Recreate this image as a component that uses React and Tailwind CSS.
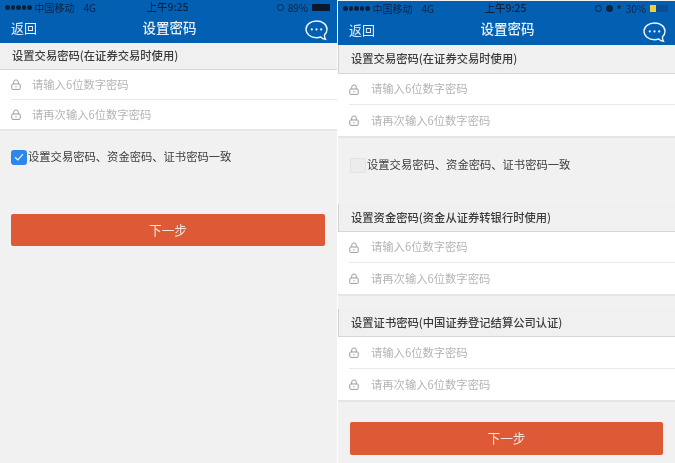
const FONT = '"Noto Sans CJK SC", "Liberation Sans", sans-serif';

function Lock() {
  return (
    <svg width="10" height="11" viewBox="0 0 10 11" fill="none" stroke="#9c9c9c" strokeWidth="1" className="shrink-0">
      <path d="M2.700 5V3.200a2.300 2.300 0 0 1 4.600 0V5" />
      <rect x="0.800" y="5" width="8.400" height="5.400" rx="0.800" />
      <path d="M5 7v1.400" />
    </svg>
  );
}

function Bubble() {
  return (
    <svg width="23" height="21" viewBox="0 0 23 21" fill="none">
      <path d="M11.500 1C17.400 1 22 4.500 22 9.200c0 2.300-1 4.200-2.500 5.600-.2 1.500.2 3.100 1 4.500-2-.2-3.600-1-4.800-2.300-1.300.5-2.700.7-4.200.7C5.600 17.700 1 14 1 9.300S5.600 1 11.500 1z" stroke="#eef5fb" strokeWidth="1.400" />
      <circle cx="6.800" cy="9.400" r="1.100" fill="#eef5fb" />
      <circle cx="11.500" cy="9.400" r="1.100" fill="#eef5fb" />
      <circle cx="16.200" cy="9.400" r="1.100" fill="#eef5fb" />
    </svg>
  );
}

function Dots({ color }) {
  return (
    <span className="flex gap-[1px]">
      {[0, 1, 2, 3, 4].map((i) => (
        <span key={i} className="w-[4.500px] h-[4.500px] rounded-full" style={{ background: color }} />
      ))}
    </span>
  );
}

function Header({ right, pad, titleCls, bubbleCls }) {
  return (
    <div className={`bg-[#035fb2] flex flex-col shrink-0 ${pad}`}>
      <div className="h-[15px] flex items-center justify-between pl-[5px] pr-[7px] text-[10px] leading-none text-[#10223c]">
        <span className="flex items-center gap-[3px] w-[118px]">
          <Dots color="#0e2039" />
          <span>中国移动</span>
          <span className="ml-[6px]">4G</span>
        </span>
        <span className="text-[10.500px] font-medium">上午9:25</span>
        <span className="flex items-center justify-end gap-[4px] w-[118px]">{right}</span>
      </div>
      <div className="h-[28px] flex items-center justify-between pl-[11px] pr-[9px] text-[#e6f0f8]">
        <span className={`text-[13px] leading-none w-[60px] ${titleCls}`}>返回</span>
        <span className={`text-[13.500px] leading-none font-medium ${titleCls}`}>设置密码</span>
        <span className={`w-[60px] flex justify-end ${bubbleCls}`}><Bubble /></span>
      </div>
    </div>
  );
}

function Section({ title, h, rowH, last, titleCls, gap }) {
  return (
    <div className="shrink-0">
      <div className={`${h} ${titleCls} flex items-center text-[11.300px] leading-none font-medium text-[#3c3c3c] border-b border-[#d6d6d6] bg-[#f0f0f0]`}>
        {title}
      </div>
      <div className="bg-white border-b-2 border-[#e6e6e6]">
        <div className={`${rowH} ${gap} ml-[11px] flex items-center border-b border-[#e9e9e9] text-[11.300px] leading-none text-[#b4b4b4]`}>
          <Lock />
          <span>请输入6位数字密码</span>
        </div>
        <div className={`${last} ${gap} ml-[11px] flex items-center text-[11.300px] leading-none text-[#b4b4b4]`}>
          <Lock />
          <span>请再次输入6位数字密码</span>
        </div>
      </div>
    </div>
  );
}

function Button({ cls }) {
  return (
    <div className={`${cls} bg-[#de5935] rounded-[2px] flex items-center justify-center text-[12.700px] leading-none text-[#f8e5de] shrink-0`}>
      下一步
    </div>
  );
}

const RIGHT_TITLE = "pl-[12px] border-l border-l-[#cfcfcf]";
const RIGHT_GAP = "gap-[12px]";

export default function App() {
  return (
    <div className="w-[675px] h-[463px] flex bg-white overflow-hidden blur-[0.5px]" style={{ fontFamily: FONT }}>
      <div className="w-[337px] h-full bg-[#f1f1f1] flex flex-col">
        <Header
          pad=""
          titleCls="mb-[3px]"
          bubbleCls="mt-[2px]"
          right={
            <>
              <span className="w-[7px] h-[7px] rounded-full border border-[#10233f]" />
              <span>89%</span>
              <span className="w-[18px] h-[7px] bg-[#0b1730] rounded-[1px]" />
            </>
          }
        />
        <Section title="设置交易密码(在证券交易时使用)" titleCls="pl-[12px]" gap="gap-[11px]" h="h-[27px]" rowH="h-[30px]" last="h-[29px]" />
        <div className="mt-[18px] ml-[11px] flex items-center h-[16px] shrink-0">
          <span className="w-[16px] h-[15px] rounded-[3px] bg-[#2f86ea] flex items-center justify-center">
            <svg width="10" height="8" viewBox="0 0 10 8" fill="none" stroke="#eaf3fd" strokeWidth="1.200">
              <path d="M1 4.200 3.800 6.800 9 1.200" />
            </svg>
          </span>
          <span className="ml-[1px] text-[11.300px] leading-none text-[#3c3c3c]">设置交易密码、资金密码、证书密码一致</span>
        </div>
        <Button cls="mt-[49px] ml-[11px] w-[314px] h-[32px]" />
      </div>
      <div className="w-[337px] h-full ml-[1px] bg-[#f1f1f1] flex flex-col pt-[1px]">
        <Header
          pad="pb-[1px]"
          titleCls="mb-[2px]"
          bubbleCls="mt-[4px]"
          right={
            <>
              <span className="w-[7px] h-[7px] rounded-full border border-[#10233f]" />
              <span className="w-[7px] h-[7px] rounded-full bg-[#10233f]" />
              <span className="font-bold">*</span>
              <span>30%</span>
              <span className="w-[18px] h-[7px] bg-[#0a4f95] rounded-[1px] flex">
                <span className="w-[6px] h-full bg-[#f2cf3a]" />
              </span>
            </>
          }
        />
        <Section title="设置交易密码(在证券交易时使用)" titleCls={RIGHT_TITLE} gap={RIGHT_GAP} h="h-[29px]" rowH="h-[31px]" last="h-[31px]" />
        <div className="mt-[19px] ml-[12px] flex items-center h-[16px] shrink-0">
          <span className="w-[16px] h-[15px] rounded-[2px] bg-[#ececec] border border-[#e2e2e2]" />
          <span className="ml-[1px] text-[11.300px] leading-none text-[#3c3c3c]">设置交易密码、资金密码、证书密码一致</span>
        </div>
        <div className="mt-[31px]">
          <Section title="设置资金密码(资金从证券转银行时使用)" titleCls={RIGHT_TITLE} gap={RIGHT_GAP} h="h-[28px]" rowH="h-[31px]" last="h-[31px]" />
        </div>
        <div className="mt-[13px]">
          <Section title="设置证书密码(中国证券登记结算公司认证)" titleCls={RIGHT_TITLE} gap={RIGHT_GAP} h="h-[28px]" rowH="h-[32px]" last="h-[31px]" />
        </div>
        <Button cls="mt-[20px] ml-[12px] w-[313px] h-[33px]" />
      </div>
    </div>
  );
}
